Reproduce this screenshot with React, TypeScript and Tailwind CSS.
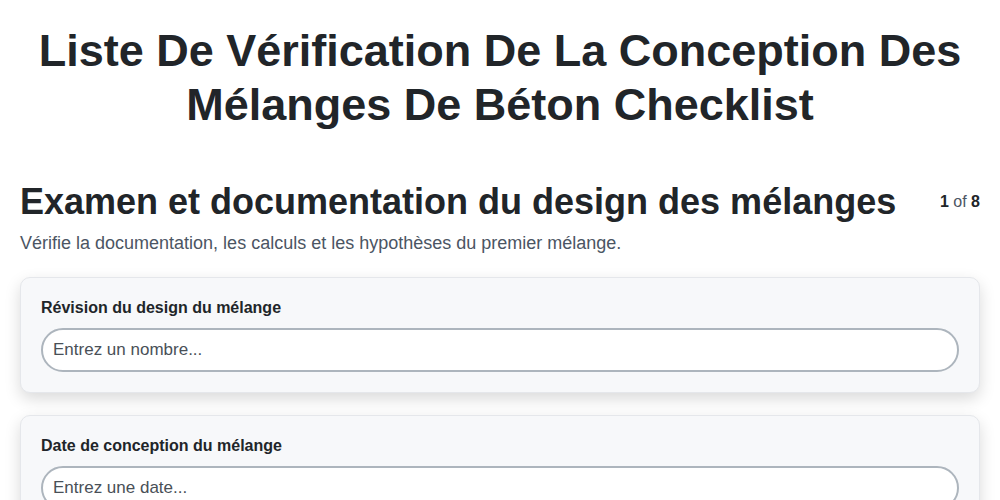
import React from "react";

type Field = { label: string; placeholder: string; type: string };

const fields: Field[] = [
  { label: "Révision du design du mélange", placeholder: "Entrez un nombre...", type: "number" },
  { label: "Date de conception du mélange", placeholder: "Entrez une date...", type: "text" },
];

const FieldCard = ({ field }: { field: Field }) => (
  <div className="rounded-[10px] border border-[#e5e7eb] bg-[#f7f8fa] px-5 pt-[18px] pb-5 shadow-[0_6px_16px_rgba(0,0,0,0.15)]">
    <label className="mb-2 block text-base leading-6 font-bold text-[#212529]">{field.label}</label>
    <input
      type={field.type}
      placeholder={field.placeholder}
      className="block h-11 w-full rounded-full border-2 border-[#adb5bd] bg-white px-2.5 text-[17px] text-[#212529] outline-none placeholder:text-[#495057]"
    />
  </div>
);

export default function App() {
  return (
    <div className="min-h-screen bg-white px-5 pt-6 font-['Liberation_Sans',Arial,sans-serif] text-[#212529]">
      <h1 className="mb-[47px] text-center text-[45px] leading-[54px] font-bold">
        Liste De Vérification De La Conception Des
        <br />
        Mélanges De Béton Checklist
      </h1>

      {/* step header */}
      <div className="flex items-center justify-between">
        <h2 className="text-4xl leading-[45px] font-bold">Examen et documentation du design des mélanges</h2>
        <span className="text-base text-[#4b5563]">
          <b className="text-[#212529]">1</b> of <b className="text-[#212529]">8</b>
        </span>
      </div>
      <p className="mt-[5px] mb-5 text-lg leading-7 text-[#4b5563]">
        Vérifie la documentation, les calculs et les hypothèses du premier mélange.
      </p>

      <div className="flex flex-col gap-[22px] pb-10">
        {fields.map((f) => (
          <FieldCard key={f.label} field={f} />
        ))}
      </div>
    </div>
  );
}
